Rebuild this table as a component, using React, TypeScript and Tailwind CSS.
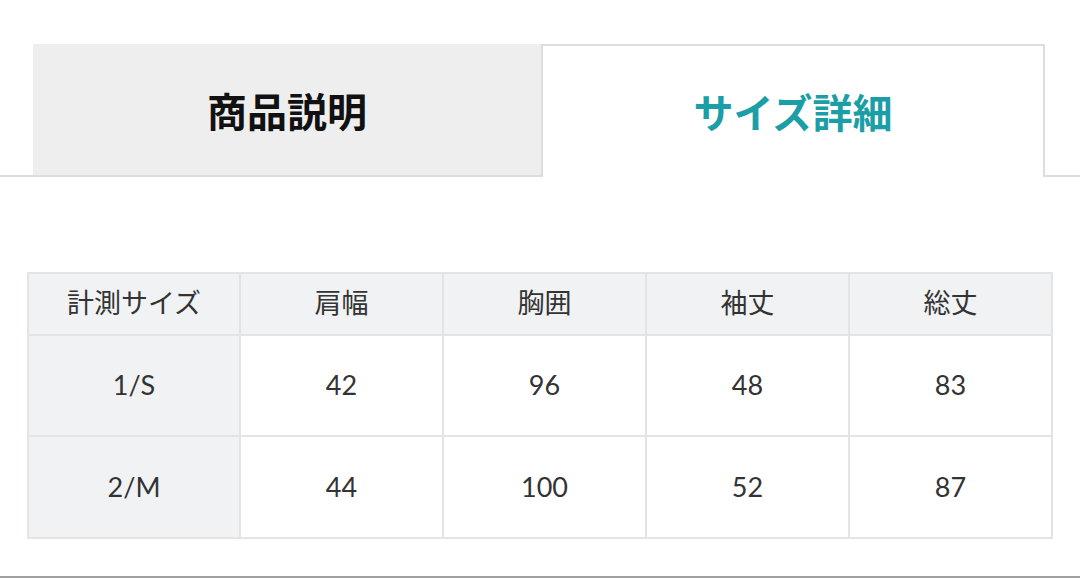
import React from "react";

const headers = ["計測サイズ", "肩幅", "胸囲", "袖丈", "総丈"];
const rows = [
  ["1/S", "42", "96", "48", "83"],
  ["2/M", "44", "100", "52", "87"],
];

export default function App() {
  return (
    <div className="w-[1080px] h-[578px] bg-white overflow-hidden flex flex-col" style={{ fontFamily: '"Lato", "Noto Sans CJK JP", sans-serif' }}>
      <div className="mt-[44px] flex pl-[33px] border-b-2 border-[#dddddd] h-[133px]">
        <div className="w-[508px] h-[131px] bg-[#eeeeee] flex items-center justify-center">
          <span className="text-[40px] font-bold text-[#111111] leading-none" style={{ fontFamily: '"Noto Sans CJK JP", sans-serif' }}>商品説明</span>
        </div>
        <div className="w-[504px] h-[133px] bg-white border-2 border-b-0 border-[#dddddd] flex items-center justify-center pb-[1px]">
          <span className="text-[40px] font-bold text-[#1c9ea7] leading-none" style={{ fontFamily: '"Noto Sans CJK JP", sans-serif' }}>サイズ詳細</span>
        </div>
      </div>
      <div className="mt-[95px] ml-[27px] w-[1026px] border-l-2 border-t-2 border-[#e4e4e4] grid grid-cols-[212px_repeat(4,1fr)] text-[#333333]">
        {headers.map((h) => (
          <div key={h} className="h-[62px] bg-[#f1f2f4] border-r-2 border-b-2 border-[#e4e4e4] flex items-center justify-center text-[27px] pb-[3px]" style={{ fontFamily: '"Noto Sans CJK JP", sans-serif' }}>
            {h}
          </div>
        ))}
        {rows.map((r, ri) =>
          r.map((c, ci) => (
            <div
              key={ri + "-" + ci}
              className={
                (ci === 0 ? "bg-[#f1f2f4] " : "bg-white ") +
                (ri === 0 ? "h-[101px] " : "h-[102px] ") +
                "border-r-2 border-b-2 border-[#e4e4e4] flex items-center justify-center text-[27px]"
              }
            >
              {c}
            </div>
          ))
        )}
      </div>
      <div className="mt-[37px] h-[2px] bg-[#a0a0a0] w-full" />
    </div>
  );
}
